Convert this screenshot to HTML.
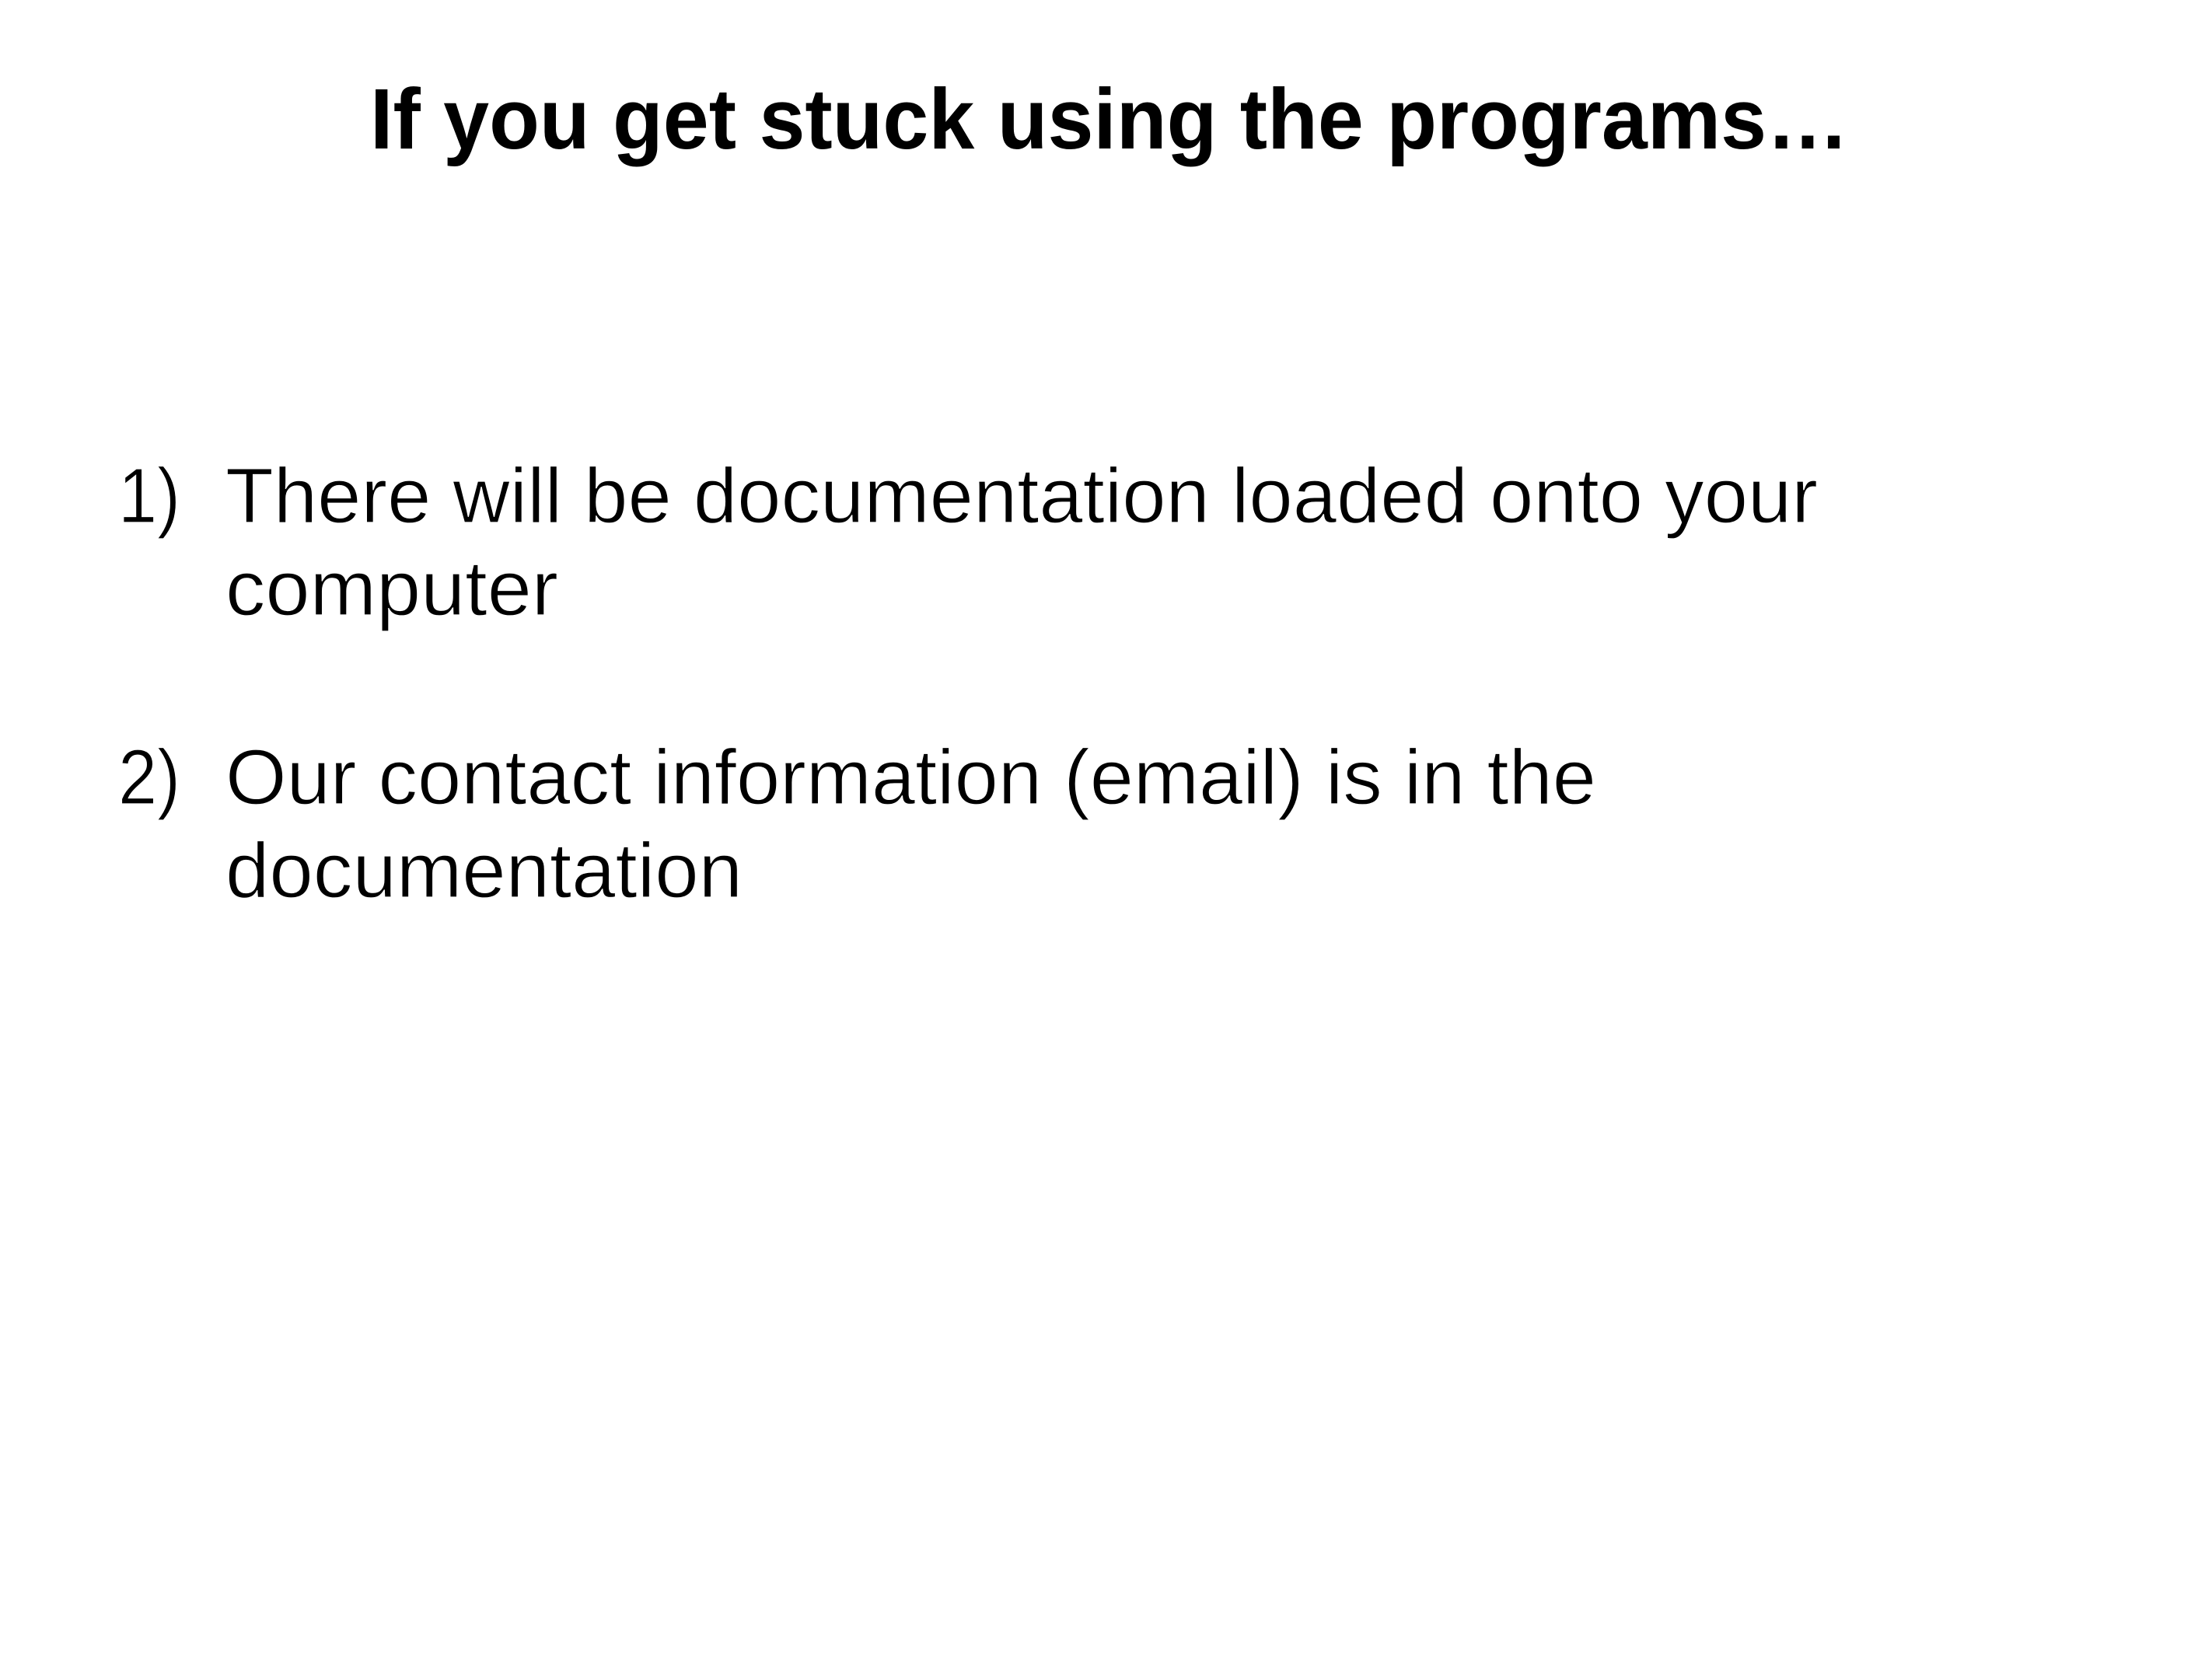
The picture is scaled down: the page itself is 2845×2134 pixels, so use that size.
<!DOCTYPE html>
<html>
<head>
<meta charset="utf-8">
<style>
html,body{margin:0;padding:0;background:#fff;}
svg{display:block;}
</style>
</head>
<body>
<svg width="2845" height="2134" viewBox="0 0 2845 2134" xmlns="http://www.w3.org/2000/svg">
<rect width="2845" height="2134" fill="#fff"/>
<g font-family="'Liberation Sans', sans-serif" fill="#000">
<text x="476" y="191" font-size="110" font-weight="bold" textLength="1902" lengthAdjust="spacingAndGlyphs">If you get stuck using the programs…</text>
<g font-size="100" font-weight="normal" stroke="#fff" stroke-width="1.2">
<text x="152" y="672" textLength="80" lengthAdjust="spacingAndGlyphs">1)</text>
<text x="290" y="672" textLength="2048" lengthAdjust="spacingAndGlyphs">There will be documentation loaded onto your</text>
<text x="290" y="791" textLength="428" lengthAdjust="spacingAndGlyphs">computer</text>
<text x="152" y="1034" textLength="80" lengthAdjust="spacingAndGlyphs">2)</text>
<text x="290" y="1034" textLength="1763" lengthAdjust="spacingAndGlyphs">Our contact information (email) is in the</text>
<text x="290" y="1154" textLength="665" lengthAdjust="spacingAndGlyphs">documentation</text>
</g>
</g>
</svg>
</body>
</html>
